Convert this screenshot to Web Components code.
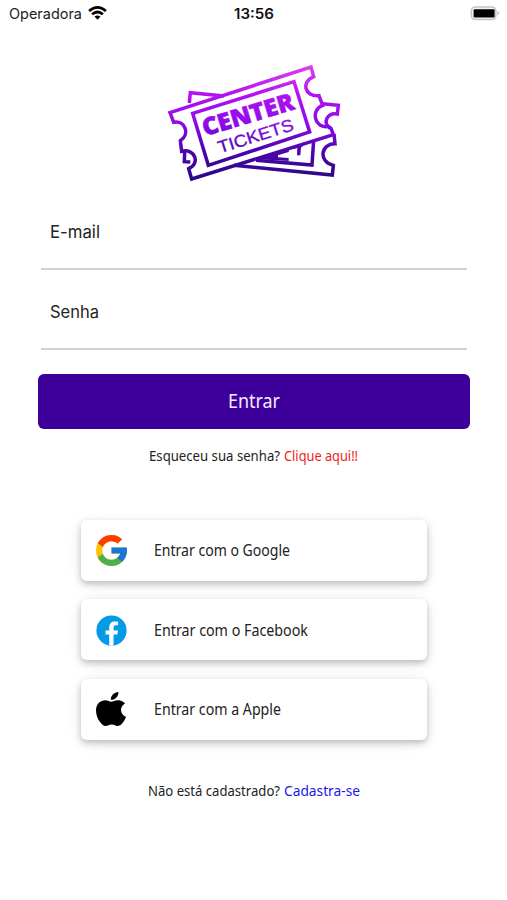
<!DOCTYPE html>
<html lang="pt-BR">
<head>
<meta charset="utf-8">
<title>Center Tickets</title>
<style>
html,body{margin:0;background:#fff}
body{width:507px;height:900px;overflow:hidden;font-family:"Noto Sans",sans-serif;color:#222}
</style>
</head>
<body>
<login-screen></login-screen>
<script>
const define = (name, render, ready) => customElements.define(name, class extends HTMLElement {
  connectedCallback() {
    if (this.shadowRoot) return;
    this.attachShadow({mode: 'open'}).innerHTML = render(this);
    if (ready) ready(this);
  }
});

/* One line of text condensed or widened to an exact advance width. */
define('fit-text', el => {
  const w = +el.getAttribute('w'), s = +el.getAttribute('size');
  return `<style>:host{display:block;flex:none;width:${w}px;height:${s}px}
  span{display:inline-block;vertical-align:top;white-space:nowrap;font-size:${s}px;line-height:${s}px;transform-origin:0 0}</style><span>${el.getAttribute('text')}</span>`;
}, el => {
  const span = el.shadowRoot.querySelector('span');
  const natural = span.getBoundingClientRect().width;
  if (natural) span.style.transform = `scaleX(${el.getAttribute('w') / natural})`;
});

define('status-bar', () => `<style>
:host{display:grid;grid-template-columns:1fr auto 1fr;align-items:center;height:28px;padding:0 7px 0 9px;font-family:Inter,sans-serif;color:#222}
.l{display:flex;align-items:center;gap:6px}.b{justify-self:end;display:block;margin-top:-2px}.t{font-weight:600;color:#111;margin-right:2px}
.w{display:block;margin-top:-2px}
</style>
<div class="l"><fit-text text="Operadora" w="73" size="14.5"></fit-text>
<svg class="w" width="19" height="14" viewBox="0 0 19 14"><g fill="none" stroke="#000" stroke-width="2.7"><path d="M1.1 5.1Q9.5-2.2 17.9 5.1"/><path d="M4.1 8.3Q9.5 3.7 14.9 8.3"/></g><path d="M6.5 10.6Q9.5 8.2 12.5 10.6L9.5 13.7Z"/></svg></div>
<fit-text class="t" text="13:56" w="40" size="14.5"></fit-text>
<svg class="b" width="30" height="15" viewBox="0 0 30 15"><rect x="1.3" y="1" width="24.6" height="12.6" rx="4" fill="#f4f4f4" stroke="#c4c4c4" stroke-width="1.5"/><rect x="3.6" y="3.2" width="21" height="8.2" rx="1"/><path d="M27.5 5.1q3.2 2.2 0 4.4z" fill="#bbb"/></svg>`);

define('ticket-logo', () => {
  const stops = `<stop offset="0" stop-color="#db45ea"/><stop offset=".25" stop-color="#b512f0"/><stop offset=".52" stop-color="#8b0aea"/><stop offset=".74" stop-color="#4c05ae"/><stop offset="1" stop-color="#2b0784"/>`;
  const grad = (id, t) => `<linearGradient id="${id}" gradientUnits="userSpaceOnUse" x1="0" y1="15" x2="0" y2="360" gradientTransform="${t}">${stops}</linearGradient>`;
  return `<style>:host{display:block;width:190px;height:126px}svg{display:block}</style>
<svg width="190" height="126" viewBox="0 0 570 378"><defs>${grad('g', '')}${grad('gc', 'rotate(16.8) translate(-135 -229)')}${grad('gt', 'rotate(17.5) translate(-180 -280)')}</defs>
<g fill="none" stroke="url(#g)" stroke-width="10.5" stroke-linejoin="miter">
<path d="M88 129L91 98L192 108"/><path d="M488 131L535 136L532 162C502 157 486 188 510 205"/>
<path d="M522 222L525 251C481 251 475 306 520 316L517 345L222 316"/>
<path d="M74 276L73 305L91 306"/><path d="M461 240L456 315L288 301"/>
<path d="M30 158L453 21L461 50C423 65 433 111 477 107L488 136C451 149 463 208 505 199L513 205L520 224L95 357L86 326C122 311 105 264 65 274L61 242C90 224 77 180 41 187Z"/>
<path d="M98 160L402 65L449 216L145 316Z"/>
</g>
<path d="M298 293L388 264L386 276L354 286V292L386 294V303L298 298Z" fill="url(#g)"/><path d="M398 260L427 252V262H423L421 286H411L412 264L397 268Z" fill="url(#g)"/>
<text transform="translate(135 229) rotate(-16.8)" font-family="Open Sans" font-weight="800" font-size="72" textLength="284" lengthAdjust="spacingAndGlyphs" fill="url(#gc)" stroke="url(#gc)" stroke-width="2">CENTER</text>
<text transform="translate(180 280) rotate(-17.5)" font-family="Liberation Sans" font-size="51" textLength="235" lengthAdjust="spacingAndGlyphs" fill="url(#gt)" stroke="url(#gt)" stroke-width="1">TICKETS</text>
</svg>`;
});

define('line-field', el => `<style>
:host{display:flex;flex-direction:column;justify-content:space-between;height:60px;border-bottom:2px solid #d2d2d2;font-family:Inter,sans-serif;color:#222}
.p{padding:16px 0 0 9px}
</style><div class="p"><fit-text text="${el.getAttribute('label')}" w="${el.getAttribute('w')}" size="17"></fit-text></div>`);

define('primary-button', () => `<style>
:host{display:flex;align-items:center;justify-content:center;height:55px;border-radius:6px;background:#3d009a;color:#f4edff}
</style><slot></slot>`);

const icons = {
google: `<svg width="31" height="31" viewBox="4 4 40 40"><path fill="#FFC107" d="M43.611 20.083H42V20H24v8h11.303C33.654 32.657 29.223 36 24 36c-6.627 0-12-5.373-12-12s5.373-12 12-12c3.059 0 5.842 1.154 7.961 3.039l5.657-5.657C34.046 6.053 29.268 4 24 4 12.955 4 4 12.955 4 24s8.955 20 20 20 20-8.955 20-20c0-1.341-.138-2.65-.389-3.917z"/><path fill="#FF3D00" d="M6.306 14.691l6.571 4.819C14.655 15.108 18.961 12 24 12c3.059 0 5.842 1.154 7.961 3.039l5.657-5.657C34.046 6.053 29.268 4 24 4 16.318 4 9.656 8.337 6.306 14.691z"/><path fill="#4CAF50" d="M24 44c5.166 0 9.86-1.977 13.409-5.192l-6.19-5.238C29.211 35.091 26.715 36 24 36c-5.202 0-9.619-3.317-11.283-7.946l-6.522 5.025C9.505 39.556 16.227 44 24 44z"/><path fill="#1976D2" d="M43.611 20.083H42V20H24v8h11.303a12.04 12.04 0 0 1-4.087 5.571l6.193 5.238C36.971 39.205 44 34 44 24c0-1.341-.138-2.65-.389-3.917z"/></svg>`,
facebook: `<svg width="31" height="31" viewBox="4.5 4.5 39 39"><path fill="#039be5" d="M24 5a19 19 0 1 0 0 38 19 19 0 1 0 0-38Z"/><path fill="#fff" d="M26.572 29.036h4.917l.772-4.995h-5.69v-2.73c0-2.075.678-3.915 2.619-3.915h3.119v-4.359c-.548-.074-1.707-.236-3.897-.236-4.573 0-7.254 2.415-7.254 7.917v3.323h-4.701v4.995h4.701v13.729c.931.14 1.874.235 2.842.235.875 0 1.729-.08 2.572-.194z"/></svg>`,
apple: `<svg width="30" height="34" viewBox="0 0 814 1000" preserveAspectRatio="none"><path d="M788.1 340.9c-5.8 4.5-108.2 62.2-108.2 190.5 0 148.4 130.3 200.9 134.2 202.2-.6 3.2-20.7 71.9-68.7 141.9-42.8 61.6-87.5 123.1-155.5 123.1s-85.5-39.5-164-39.5c-76.5 0-103.7 40.8-165.9 40.8s-105.6-57-155.5-127C46.7 790.7 0 663 0 541.8c0-194.4 126.4-297.5 250.8-297.5 66.1 0 121.2 43.4 162.7 43.4 39.5 0 101.1-46 176.3-46 28.5 0 130.9 2.6 198.3 99.2zM554.1 159.4c31.1-36.9 53.1-88.1 53.1-139.3 0-7.1-.6-14.3-1.9-20.1-50.6 1.9-110.8 33.7-147.1 75.8-28.5 32.4-55.1 83.6-55.1 135.5 0 7.8 1.3 15.6 1.9 18.1 3.2.6 8.4 1.3 13.6 1.3 45.4 0 102.5-30.4 135.5-71.3z"/></svg>`
};
define('social-button', el => `<style>
:host{box-sizing:border-box;display:grid;grid-template-columns:31px auto;column-gap:27px;justify-content:start;align-items:center;height:61px;padding:0 15px;border-radius:6px;background:#fff;box-shadow:0 3px 6px rgba(0,0,0,.20),0 3px 14px rgba(0,0,0,.10);color:#222}
svg{display:block}.google,.facebook{margin-top:1px}
::slotted(fit-text){margin-top:2px}
</style><div class="${el.getAttribute('kind')}">${icons[el.getAttribute('kind')]}</div><slot></slot>`);

define('prompt-line', () => `<style>:host{display:flex;justify-content:center;gap:4px;color:#222}</style><slot></slot>`);

define('login-screen', () => `<style>
:host{display:flex;flex-direction:column;height:900px}
ticket-logo{margin:32px 0 0 160px}
.fields{display:grid;gap:18px;margin:22px 40px 0 41px}
primary-button{margin:23.5px 37px 0 38px}
.forgot{margin-top:19px}
.social{display:grid;gap:18.5px;margin:57.5px 80px 0 81px}
.join{margin-top:43px}
</style>
<status-bar></status-bar>
<ticket-logo></ticket-logo>
<div class="fields"><line-field label="E-mail" w="50"></line-field><line-field label="Senha" w="49"></line-field></div>
<primary-button><fit-text text="Entrar" w="52" size="19"></fit-text></primary-button>
<prompt-line class="forgot"><fit-text text="Esqueceu sua senha?" w="131" size="14.5"></fit-text><fit-text style="color:#f01c1c" text="Clique aqui!!" w="74" size="14.5"></fit-text></prompt-line>
<div class="social">
<social-button kind="google"><fit-text text="Entrar com o Google" w="136" size="15.5"></fit-text></social-button>
<social-button kind="facebook"><fit-text text="Entrar com o Facebook" w="154" size="15.5"></fit-text></social-button>
<social-button kind="apple"><fit-text text="Entrar com a Apple" w="127" size="15.5"></fit-text></social-button>
</div>
<prompt-line class="join"><fit-text text="Não está cadastrado?" w="132" size="14.5"></fit-text><fit-text style="color:#2018e8" text="Cadastra-se" w="76" size="14.5"></fit-text></prompt-line>`);
</script>
</body>
</html>
